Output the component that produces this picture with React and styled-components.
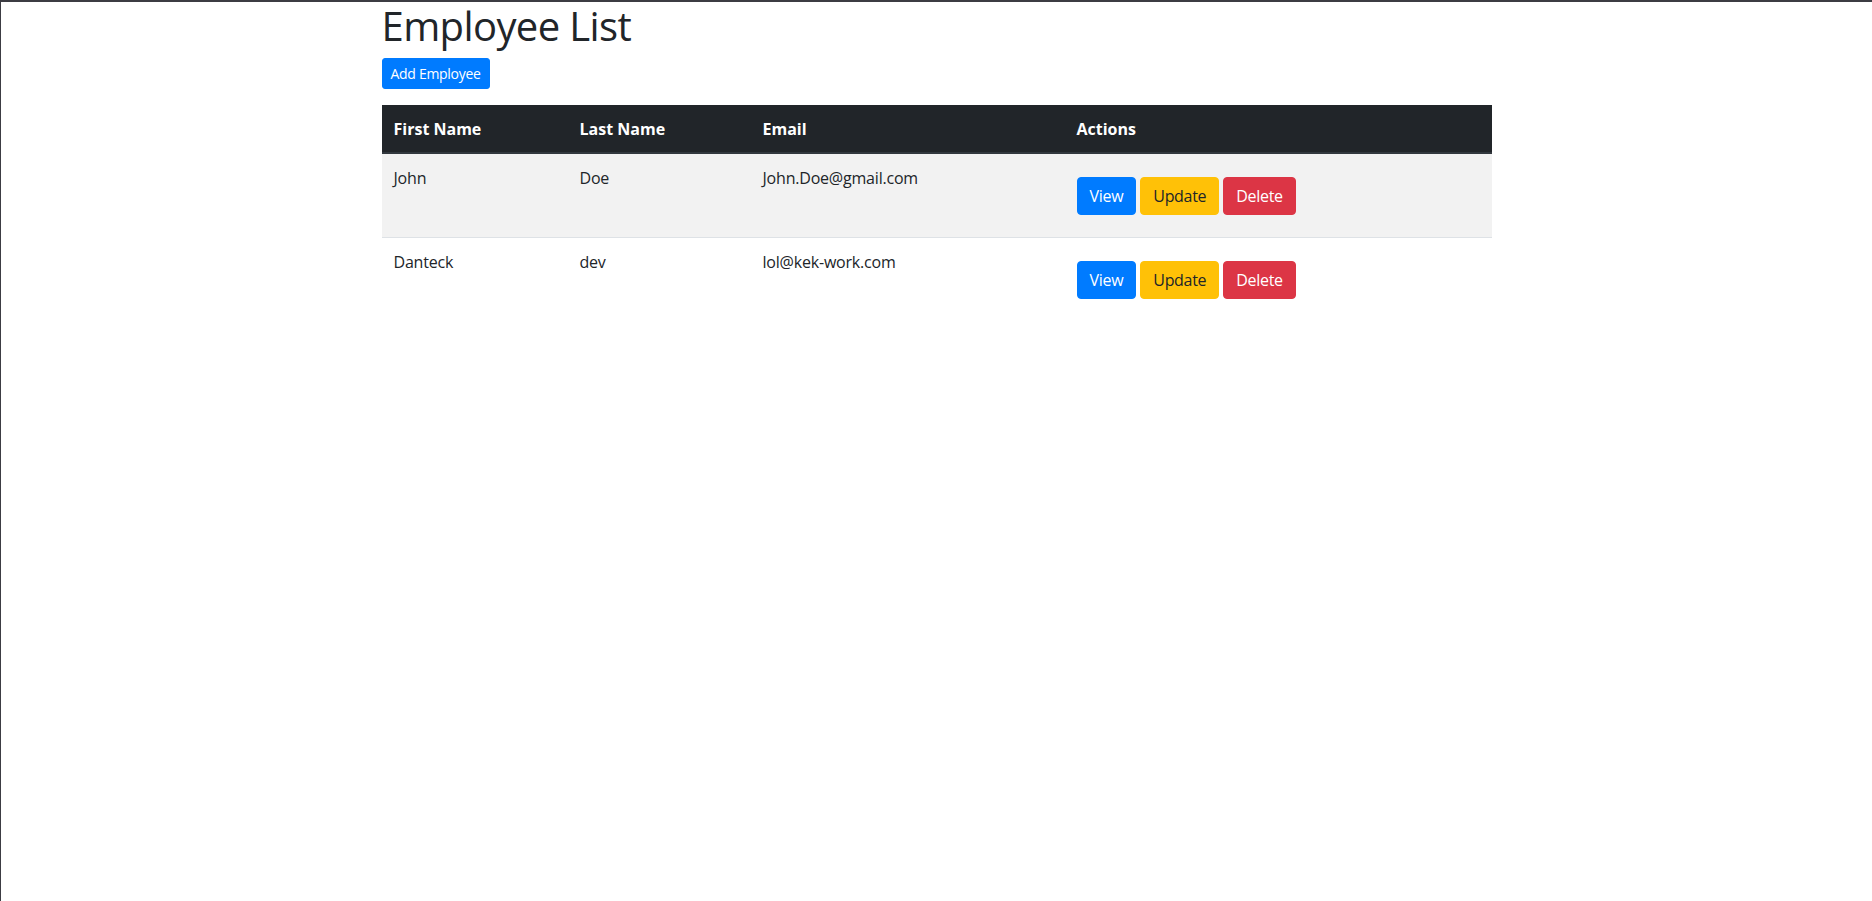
import React from "react"
import styled, { createGlobalStyle } from "styled-components"

const GlobalStyle = createGlobalStyle`
    * {
        box-sizing: border-box;
    }
    body {
        margin: 0;
        background: #fff;
        color: #212529;
        font-family: "Open Sans", "Noto Sans", sans-serif;
        font-size: 16px;
        line-height: 24px;
    }
`

const Frame = styled.div`
    min-height: 100vh;
    border-top: 2px solid #3c3c43;
    border-left: 1px solid #3c3c43;
`
const Container = styled.div`
    max-width: 1140px;
    margin: 0 auto;
    padding: 0 15px;
`
const Title = styled.h1`
    margin: 0 0 8px;
    font-size: 40px;
    font-weight: 400;
    line-height: 48px;
    letter-spacing: -0.6px;
`
const Toolbar = styled.div`
    display: flex;
    margin-bottom: 16px;
`
const Button = styled.button`
    display: inline-block;
    font-family: inherit;
    font-size: ${p => (p.small ? "14px" : "16px")};
    line-height: ${p => (p.small ? "21px" : "24px")};
    letter-spacing: -0.3px;
    padding: ${p => (p.small ? "4px 8px" : "6px 12px")};
    border: 1px solid ${p => p.bg};
    border-radius: ${p => (p.small ? "3px" : "4px")};
    background: ${p => p.bg};
    color: ${p => p.fg || "#fff"};
    cursor: pointer;
`
const Table = styled.table`
    width: 100%;
    border-collapse: collapse;
`
const Th = styled.th`
    width: ${p => p.w}px;
    padding: 12px 12px 11px;
    text-align: left;
    font-weight: 700;
    color: #fff;
    background: #212529;
    border-bottom: 2px solid #32383e;
`
const Row = styled.tr`
    background: ${p => (p.striped ? "#f2f2f2" : "transparent")};
`
const Td = styled.td`
    padding: 12px;
    vertical-align: top;
    border-top: 1px solid #dee2e6;
    letter-spacing: -0.2px;
`
const Actions = styled.div`
    display: flex;
    gap: 4px;
    margin: 11px 0 10px;
`

const employees = [
    { id: 1, firstName: "John", lastName: "Doe", email: "John.Doe@gmail.com" },
    { id: 2, firstName: "Danteck", lastName: "dev", email: "lol@kek-work.com" },
]

export default function App() {
    return (
        <Frame>
            <GlobalStyle />
            <Container>
                <Title>Employee List</Title>
                <Toolbar>
                    <Button small bg="#007bff">Add Employee</Button>
                </Toolbar>
                <Table>
                    <thead>
                        <tr>
                            <Th w={186}>First Name</Th>
                            <Th w={183}>Last Name</Th>
                            <Th w={314}>Email</Th>
                            <Th w={427}>Actions</Th>
                        </tr>
                    </thead>
                    <tbody>
                        {employees.map((e, i) => (
                            <Row key={e.id} striped={i % 2 === 0}>
                                <Td>{e.firstName}</Td>
                                <Td>{e.lastName}</Td>
                                <Td>{e.email}</Td>
                                <Td>
                                    <Actions>
                                        <Button bg="#007bff">View</Button>
                                        <Button bg="#ffc107" fg="#212529">Update</Button>
                                        <Button bg="#dc3545">Delete</Button>
                                    </Actions>
                                </Td>
                            </Row>
                        ))}
                    </tbody>
                </Table>
            </Container>
        </Frame>
    )
}
